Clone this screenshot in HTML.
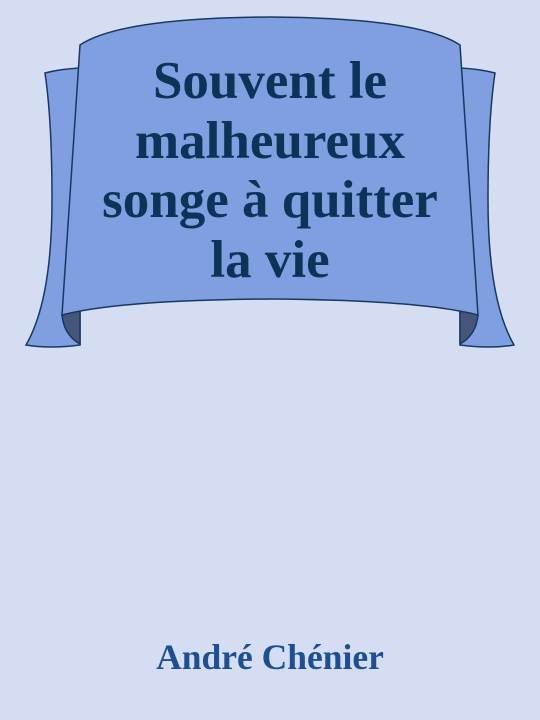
<!DOCTYPE html>
<html><head><style>
body{margin:0;width:540px;height:720px;background:#d4ddf2;position:relative;overflow:hidden;font-family:"Liberation Serif",serif}
svg{position:absolute;left:0;top:0}
.t{position:absolute;left:80px;width:380px;top:52px;text-align:center;font-weight:bold;font-size:53px;line-height:59.5px;color:#0e3359}
.a{position:absolute;left:0;width:540px;top:636px;text-align:center;font-weight:bold;font-size:35.5px;color:#1d4f92}
</style></head><body>
<svg width="540" height="720">
<g stroke="#183860" stroke-width="1.5" fill="#7f9fe0">
<path d="M45,73 Q60,69 80,68 L80,345 Q50,349 26,345 Q52,300 52,200 Q52,120 45,73 Z"/>
<path d="M495,73 Q480,69 460,68 L460,345 Q490,349 514,345 Q488,300 488,200 Q488,120 495,73 Z"/>
<path d="M62,315 Q70,311 80,310 L80,344 Q64,335 62,315 Z" fill="#44577a"/>
<path d="M478,315 Q470,311 460,310 L460,344 Q476,335 478,315 Z" fill="#44577a"/>
<path d="M80,45 Q120,18 270,17 Q420,18 460,45 L478,315 Q420,300 270,299 Q120,300 62,315 Z"/>
</g>
</svg>
<div class="t">Souvent le malheureux songe à quitter la vie</div>
<div class="a">André Chénier</div>
</body></html>
